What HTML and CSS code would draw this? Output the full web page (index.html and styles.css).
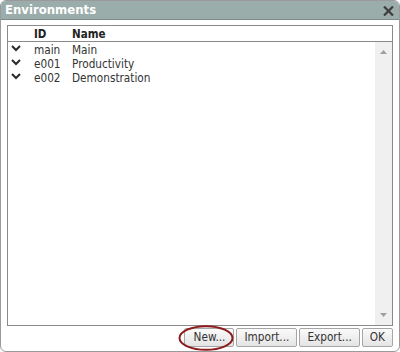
FILE: index.html
```html
<!DOCTYPE html>
<html>
<head>
<meta charset="utf-8">
<link rel="stylesheet" href="styles.css">
</head>
<body>
<div class="window">
  <div class="titlebar">
    <span class="title">Environments</span>
    <svg class="close" width="11" height="10" viewBox="0 0 11 10"><path d="M1 0.5 L10 9.5 M10 0.5 L1 9.5" stroke="#3d3d3d" stroke-width="2.2" fill="none"/></svg>
  </div>
  <div class="body">
    <div class="list">
      <div class="header">
        <span class="c-icon"></span><span class="c-id">ID</span><span class="c-name">Name</span>
      </div>
      <div class="content">
        <div class="rows">
          <div class="row"><span class="c-icon"><svg width="10" height="7" viewBox="0 0 10 7"><path d="M1 1 L5 5 L9 1" stroke="#2a2a2a" stroke-width="2" fill="none"/></svg></span><span class="c-id">main</span><span class="c-name">Main</span></div>
          <div class="row"><span class="c-icon"><svg width="10" height="7" viewBox="0 0 10 7"><path d="M1 1 L5 5 L9 1" stroke="#2a2a2a" stroke-width="2" fill="none"/></svg></span><span class="c-id">e001</span><span class="c-name">Productivity</span></div>
          <div class="row"><span class="c-icon"><svg width="10" height="7" viewBox="0 0 10 7"><path d="M1 1 L5 5 L9 1" stroke="#2a2a2a" stroke-width="2" fill="none"/></svg></span><span class="c-id">e002</span><span class="c-name">Demonstration</span></div>
        </div>
        <div class="scrollbar">
          <svg width="7" height="4" viewBox="0 0 7 4"><path d="M0 4 L3.5 0 L7 4 Z" fill="#a0a0a0"/></svg>
          <svg width="7" height="4" viewBox="0 0 7 4"><path d="M0 0 L3.5 4 L7 0 Z" fill="#a0a0a0"/></svg>
        </div>
      </div>
    </div>
    <div class="buttons">
      <button class="btn btn-new">New...</button>
      <button class="btn">Import...</button>
      <button class="btn">Export...</button>
      <button class="btn">OK</button>
      <svg class="mark" width="56" height="26" viewBox="0 0 56 26"><ellipse cx="28" cy="13" rx="26.5" ry="11.8" stroke="#8e1b1b" stroke-width="2" fill="none"/></svg>
    </div>
  </div>
</div>
</body>
</html>
```
FILE: styles.css
```css
html, body {
  margin: 0;
  padding: 0;
  background: #ffffff;
}
.window {
  box-sizing: border-box;
  width: 400px;
  height: 352px;
  border: 1px solid #9a9a9a;
  border-radius: 6px;
  overflow: hidden;
  background: #ffffff;
  display: flex;
  flex-direction: column;
  font-family: "DejaVu Sans", Verdana, sans-serif;
  font-stretch: condensed;
}
.titlebar {
  height: 18px;
  background: #9badaa;
  border-bottom: 1px solid #7e8a88;
  display: flex;
  align-items: center;
  justify-content: space-between;
  padding: 0 5px 0 4px;
}
.title {
  color: #ffffff;
  font-weight: bold;
  font-size: 13px;
  line-height: 18px;
}
.close {
  display: block;
  margin-top: 1px;
}
.body {
  flex: 1;
  display: flex;
  flex-direction: column;
  padding: 5px 6px 4px 6px;
  position: relative;
}
.list {
  flex: 1;
  border: 1px solid #8a8a8a;
  display: flex;
  flex-direction: column;
  min-height: 0;
}
.header {
  height: 15px;
  border-bottom: 1px solid #8a8a8a;
  display: flex;
  align-items: center;
  font-size: 11.5px;
  font-weight: bold;
  color: #222;
}
.c-icon {
  width: 26px;
  display: flex;
  justify-content: flex-start;
  padding-left: 3px;
  box-sizing: border-box;
}
.c-id {
  width: 38px;
}
.c-name {
  flex: 1;
}
.content {
  flex: 1;
  display: flex;
}
.rows {
  flex: 1;
  padding-top: 1px;
}
.row {
  height: 14px;
  display: flex;
  align-items: center;
  font-size: 11.7px;
  color: #333;
}
.row .c-icon svg {
  display: block;
  margin-top: -3px;
}
.scrollbar {
  width: 17px;
  background: #f0f0f0;
  display: flex;
  flex-direction: column;
  justify-content: space-between;
  align-items: center;
  padding: 8px 0 8px 0;
  box-sizing: border-box;
}
.scrollbar svg {
  display: block;
}
.buttons {
  display: flex;
  justify-content: flex-end;
  gap: 2px;
  margin-top: 2px;
  position: relative;
}
.btn {
  height: 19px;
  padding: 0 7px;
  border: 1px solid #a6a6a6;
  border-radius: 2px;
  background: linear-gradient(#fafafa, #e4e4e4);
  font-family: "DejaVu Sans", Verdana, sans-serif;
  font-stretch: condensed;
  font-size: 11.7px;
  color: #333;
  line-height: 17px;
  margin: 0;
}
.btn-new {
  padding: 0 8px 0 9px;
}
.mark {
  position: absolute;
  right: 159px;
  top: -3px;
}
```
